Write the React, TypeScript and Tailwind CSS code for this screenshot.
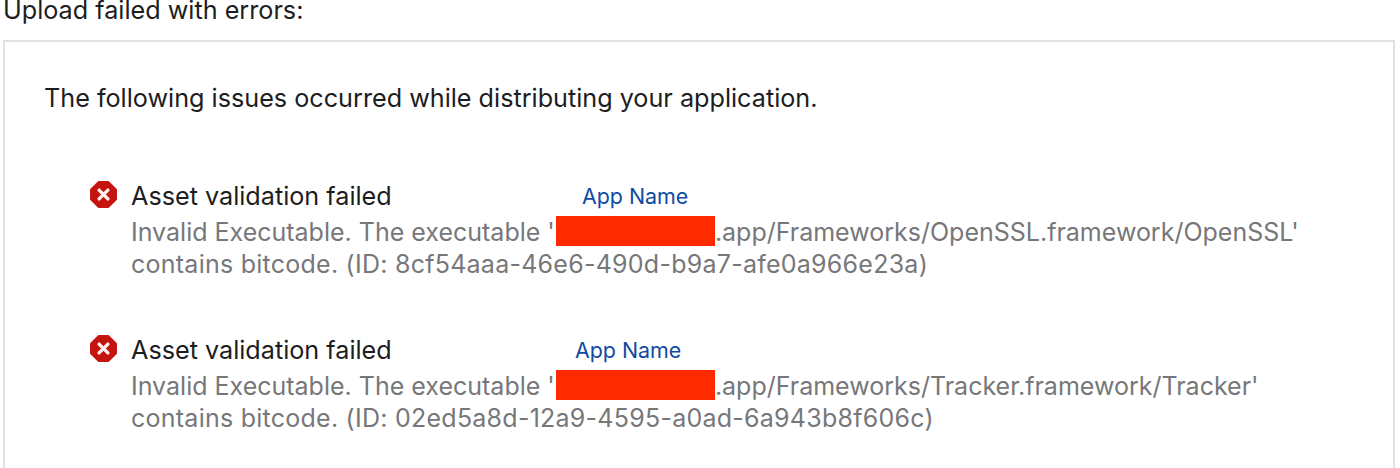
const FONT = "font-['Inter','Liberation_Sans',sans-serif]";

function ErrorIcon() {
  return (
    <svg viewBox="0 0 28 28" className="ml-[1px] h-[27px] w-[27px] shrink-0">
      <polygon points="8.6,0.5 19.4,0.5 27.5,8.6 27.5,19.4 19.4,27.5 8.6,27.5 0.5,19.4 0.5,8.6" fill="#c5140e" stroke="#c5140e" strokeLinejoin="round" strokeWidth="1" />
      <path d="M9.4 9.4 L18.6 18.6 M18.6 9.4 L9.4 18.6" stroke="#fdf3f2" strokeWidth="3.4" strokeLinecap="round" />
    </svg>
  );
}

function Issue({ path, id, labelLeft }: { path: string; id: string; labelLeft: string }) {
  return (
    <div className="relative flex items-start">
      <div className="mt-[1px] w-[42px] shrink-0">
        <ErrorIcon />
      </div>
      <div>
        <div className="h-[33px] text-[25.2px] leading-[33px] text-[#1d1d1f]">Asset validation failed</div>
        <div className="mt-[3px] text-[25px] leading-[31px] text-[#77777a]">
          <div className="flex h-[33px] items-center whitespace-nowrap">
            <span>Invalid Executable. The executable '</span>
            <span className="-mt-[4px] ml-[1px] h-[30px] w-[159px] bg-[#ff2a00]" />
            <span>{path}'</span>
          </div>
          <div className="whitespace-nowrap tracking-[0.25px]">contains bitcode. (ID: {id})</div>
        </div>
      </div>
      <span className={`absolute top-0 text-[21.4px] leading-[33px] text-[#0f4ba3] ${labelLeft}`}>App Name</span>
    </div>
  );
}

export default function App() {
  return (
    <div className={`h-[468px] w-[1400px] overflow-hidden bg-white ${FONT}`}>
      <div className="-mt-[6px] pl-[3px] text-[25.2px] leading-[33px] text-[#1d1d1f]">Upload failed with errors:</div>
      <div className="mx-[3px] mt-[13px] h-[500px] w-[1392px] border-2 border-b-0 border-[#e2e2e2] px-[39px] pt-[40px]">
        <div className="text-[25.2px] leading-[33px] text-[#1d1d1f]">The following issues occurred while distributing your application.</div>
        <div className="mt-[65px] flex flex-col gap-[54px] pl-[45px]">
          <Issue path=".app/Frameworks/OpenSSL.framework/OpenSSL" id="8cf54aaa-46e6-490d-b9a7-afe0a966e23a" labelLeft="left-[493px]" />
          <Issue path=".app/Frameworks/Tracker.framework/Tracker" id="02ed5a8d-12a9-4595-a0ad-6a943b8f606c" labelLeft="left-[486px]" />
        </div>
      </div>
    </div>
  );
}
